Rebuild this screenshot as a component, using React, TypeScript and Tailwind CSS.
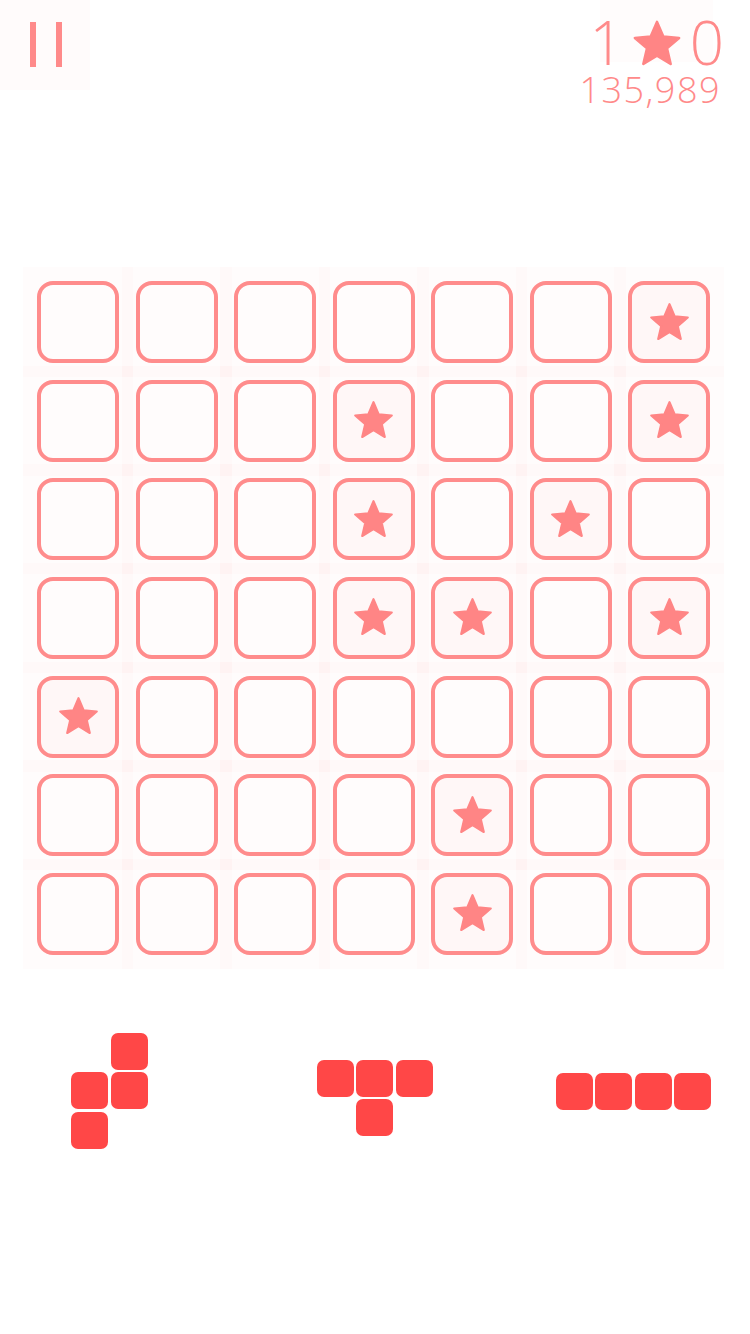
import React from "react";

const STARS: Record<number, number[]> = {
  0: [6],
  1: [3, 6],
  2: [3, 5],
  3: [3, 4, 6],
  4: [0],
  5: [4],
  6: [4],
};

const Star = ({ size, className }: { size: number; className?: string }) => (
  <svg width={size} height={size} viewBox="0 0 24 24" className={className}>
    <polygon
      points="12,1.8 14.9,8.6 22.2,9.2 16.6,14 18.3,21.2 12,17.4 5.7,21.2 7.4,14 1.8,9.2 9.1,8.6"
      fill="currentColor"
      stroke="currentColor"
      strokeWidth="1.2"
      strokeLinejoin="round"
    />
  </svg>
);

const Block = () => <div className="w-[37px] h-[37px] rounded-[7px] bg-[#ff4747]" />;
const Gap = () => <div className="w-[37px] h-[37px]" />;

const Cell = ({ star }: { star: boolean }) => (
  <div className="relative w-[82px] h-[82px]">
    <div className="absolute -inset-[14px] bg-[#ff0000]/[0.012]" />
    <div
      className={
        "relative w-full h-full rounded-[16px] border-[4px] border-[#ff8c8c] flex items-center justify-center " +
        (star ? "bg-[#ff0000]/[0.02]" : "bg-transparent")
      }
    >
      {star && <Star size={43} className="text-[#ff8585]" />}
    </div>
  </div>
);

export default function App() {
  return (
    <div className="w-[750px] h-[1334px] bg-white overflow-hidden" style={{ fontFamily: '"Open Sans", sans-serif' }}>
      {/* header */}
      <div className="flex justify-between items-start h-[110px]">
        <div className="w-[90px] h-[90px] bg-[#ff0000]/[0.015] flex justify-center gap-[20px] pt-[22px] pl-[1px]">
          <div className="w-[6px] h-[45px] bg-[#ff8a8a]" />
          <div className="w-[6px] h-[45px] bg-[#ff8a8a]" />
        </div>
        <div className="relative pr-[28px] pt-[12px] text-[#ff8a8a] font-light text-right">
          <div className="absolute top-0 right-[37px] w-[113px] h-[62px] bg-[#ff0000]/[0.012]" />
          <div className="relative flex items-center justify-end gap-[7px] text-[60px] leading-[60px] mr-[-2px]">
            <span>1</span>
            <Star size={52} className="text-[#ff8585] mt-[4px]" />
            <span>0</span>
          </div>
          <div className="relative text-[36px] leading-[34px] tracking-[1.5px] mt-[1px] mr-[1px]">135,989</div>
        </div>
      </div>

      {/* board */}
      <div className="pt-[171px] pl-[37px]">
        <div className="grid grid-cols-[repeat(7,82px)] gap-x-[16.5px] gap-y-[16.67px]">
          {Array.from({ length: 7 }).map((_, r) =>
            Array.from({ length: 7 }).map((_, c) => (
              <Cell key={r * 7 + c} star={(STARS[r] || []).includes(c)} />
            ))
          )}
        </div>
      </div>

      {/* pieces */}
      <div className="flex items-start mt-[78px] pl-[71px]">
        <div className="flex flex-col gap-[2.5px]">
          <div className="flex gap-[2.5px]"><Gap /><Block /></div>
          <div className="flex gap-[2.5px]"><Block /><Block /></div>
          <div className="flex gap-[2.5px]"><Block /><Gap /></div>
        </div>
        <div className="flex flex-col gap-[2.5px] ml-[169px] mt-[27px]">
          <div className="flex gap-[2.5px]"><Block /><Block /><Block /></div>
          <div className="flex gap-[2.5px]"><Gap /><Block /><Gap /></div>
        </div>
        <div className="flex gap-[2.5px] ml-[123px] mt-[40px]">
          <Block /><Block /><Block /><Block />
        </div>
      </div>
    </div>
  );
}
